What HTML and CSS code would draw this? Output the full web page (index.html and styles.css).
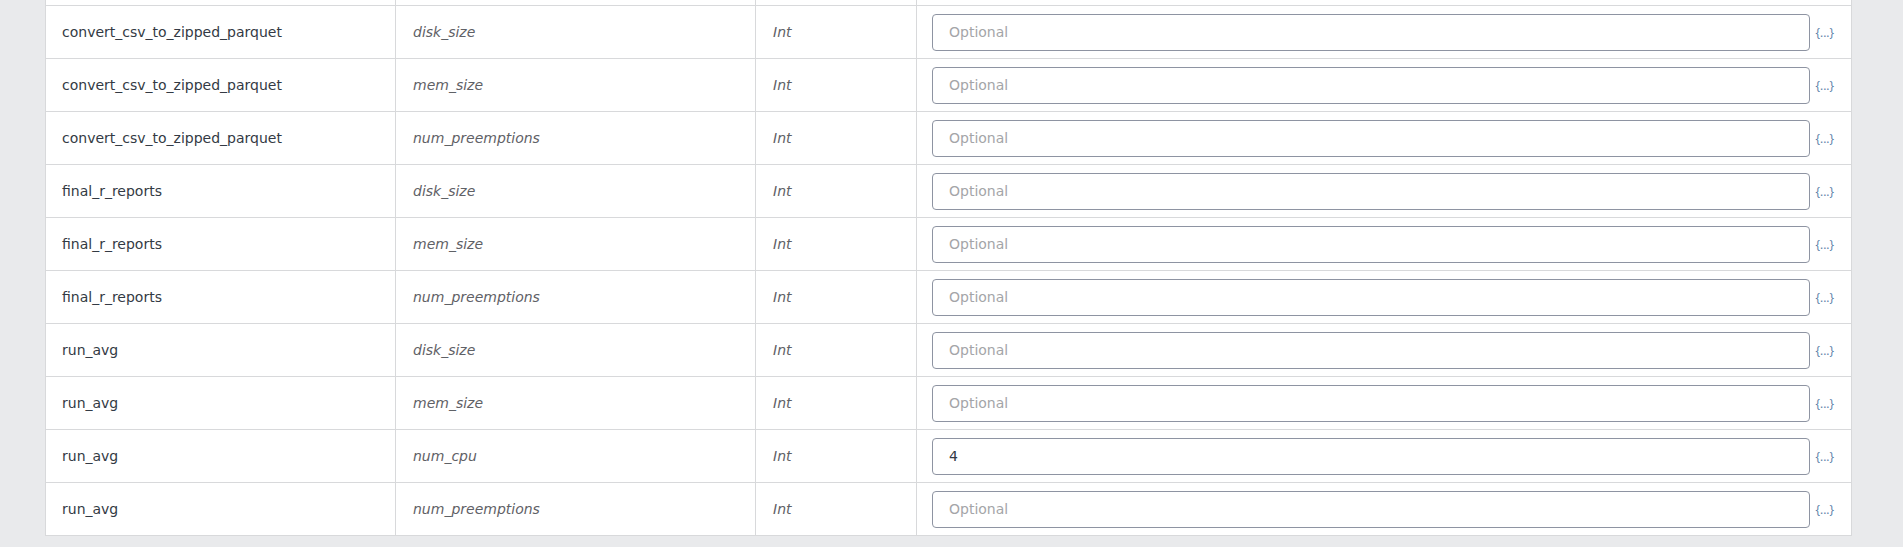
FILE: index.html
```html
<!DOCTYPE html>
<html>
<head>
<meta charset="utf-8">
<link rel="stylesheet" href="styles.css">
</head>
<body>
<div class="page">
  <table class="inputs">
    <colgroup>
      <col class="c-task"><col class="c-name"><col class="c-type"><col class="c-value">
    </colgroup>
    <tbody>
      <tr class="stub"><td></td><td></td><td></td><td></td></tr>
      <tr><td class="task">convert_csv_to_zipped_parquet</td><td class="name">disk_size</td><td class="type">Int</td><td class="value"><div class="val"><input class="field" placeholder="Optional"><span class="expr">{...}</span></div></td></tr>
      <tr><td class="task">convert_csv_to_zipped_parquet</td><td class="name">mem_size</td><td class="type">Int</td><td class="value"><div class="val"><input class="field" placeholder="Optional"><span class="expr">{...}</span></div></td></tr>
      <tr><td class="task">convert_csv_to_zipped_parquet</td><td class="name">num_preemptions</td><td class="type">Int</td><td class="value"><div class="val"><input class="field" placeholder="Optional"><span class="expr">{...}</span></div></td></tr>
      <tr><td class="task">final_r_reports</td><td class="name">disk_size</td><td class="type">Int</td><td class="value"><div class="val"><input class="field" placeholder="Optional"><span class="expr">{...}</span></div></td></tr>
      <tr><td class="task">final_r_reports</td><td class="name">mem_size</td><td class="type">Int</td><td class="value"><div class="val"><input class="field" placeholder="Optional"><span class="expr">{...}</span></div></td></tr>
      <tr><td class="task">final_r_reports</td><td class="name">num_preemptions</td><td class="type">Int</td><td class="value"><div class="val"><input class="field" placeholder="Optional"><span class="expr">{...}</span></div></td></tr>
      <tr><td class="task">run_avg</td><td class="name">disk_size</td><td class="type">Int</td><td class="value"><div class="val"><input class="field" placeholder="Optional"><span class="expr">{...}</span></div></td></tr>
      <tr><td class="task">run_avg</td><td class="name">mem_size</td><td class="type">Int</td><td class="value"><div class="val"><input class="field" placeholder="Optional"><span class="expr">{...}</span></div></td></tr>
      <tr><td class="task">run_avg</td><td class="name">num_cpu</td><td class="type">Int</td><td class="value"><div class="val"><input class="field" placeholder="Optional" value="4"><span class="expr">{...}</span></div></td></tr>
      <tr><td class="task">run_avg</td><td class="name">num_preemptions</td><td class="type">Int</td><td class="value"><div class="val"><input class="field" placeholder="Optional"><span class="expr">{...}</span></div></td></tr>
    </tbody>
  </table>
</div>
</body>
</html>
```
FILE: styles.css
```css
html, body {
  margin: 0;
  padding: 0;
  background: #e9eaec;
  font-family: "DejaVu Sans", "Liberation Sans", sans-serif;
  font-size: 14px;
  color: #333a44;
}
.page {
  padding: 0 0 0 45px;
  height: 547px;
  box-sizing: border-box;
  overflow: hidden;
}
.inputs {
  border-collapse: separate;
  border-spacing: 0;
  table-layout: fixed;
  width: 1807px;
  background: #fff;
  border-left: 1px solid #d8d9db;
}
.c-task { width: 350px; }
.c-name { width: 360px; }
.c-type { width: 161px; }
.c-value { width: 935px; }
.inputs td {
  box-sizing: border-box;
  border-right: 1px solid #d8d9db;
  border-bottom: 1px solid #d8d9db;
  height: 53px;
  padding: 0 16px;
  vertical-align: middle;
  white-space: nowrap;
}
.inputs tr.stub td {
  height: 6px;
  padding: 0;
}
.task { color: #333a44; }
.name, .type {
  font-style: italic;
  color: #5f6166;
}
.name { padding-left: 17px !important; }
.type { padding-left: 17px !important; }
.inputs td.value { padding: 0 17px 0 15px; }
.val {
  display: flex;
  align-items: center;
  gap: 6px;
}
.field {
  flex: 1;
  min-width: 0;
  height: 37px;
  box-sizing: border-box;
  border: 1px solid #8e94a2;
  border-radius: 4px;
  padding: 0 16px;
  font-family: inherit;
  font-size: 14px;
  color: #333a44;
  background: #fff;
  outline: none;
}
.field::placeholder { color: #a4a5a8; }
.expr {
  font-family: "Open Sans", "Liberation Sans", sans-serif;
  font-size: 12px;
  color: #5a7ea6;
  white-space: nowrap;
}
```
